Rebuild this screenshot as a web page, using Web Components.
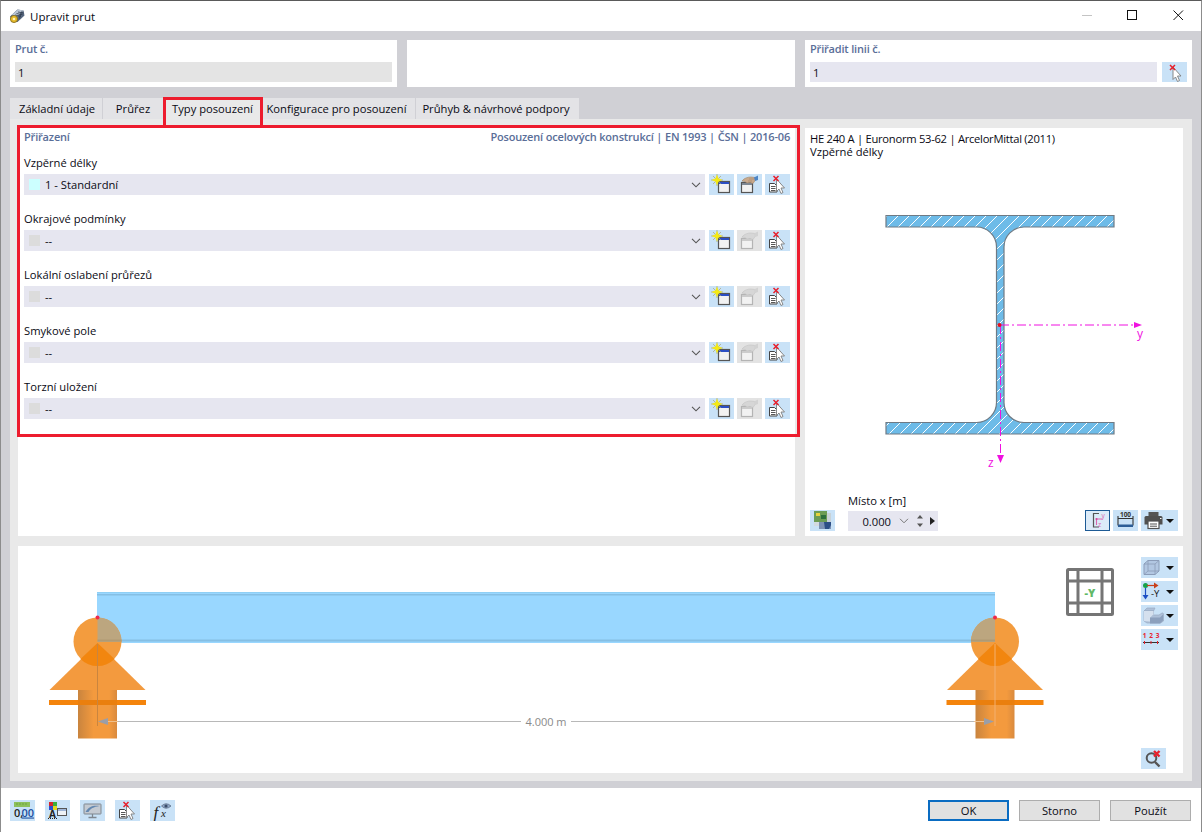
<!DOCTYPE html>
<html lang="cs">
<head>
<meta charset="utf-8">
<title>Upravit prut</title>
<style>
  html, body { margin: 0; padding: 0; background: #d0d0d5; }
  body { font: 11.2px "Open Sans", "Noto Sans", sans-serif; color: #0a0a14; }
</style>
</head>
<body>
<edit-member-dialog></edit-member-dialog>

<script>
const WIN = (x, y, w, h, bar, line) =>
  `<rect x="${x+.5}" y="${y+.5}" width="${w}" height="${h}" fill="#f2f2f2" stroke="${line}" stroke-width="1.2"/><rect x="${x+1}" y="${y+1}" width="${w-1}" height="2" fill="${bar}"/>`;
const CURSOR = (x, y) =>
  `<path d="M${x} ${y}l8 9h-3.5l2 4.5-2 1-2-4.5-2.5 2.5z" fill="#fff" stroke="#7d7d7d" stroke-width=".9" stroke-linejoin="round"/>`;
const REDX = (x, y, s = 2.5) =>
  `<path d="M${x-s} ${y-s}l${2*s} ${2*s}m0 -${2*s}l-${2*s} ${2*s}" stroke="#e8202c" stroke-width="1.5" fill="none"/>`;
const STAR = (x, y) =>
  `<path d="M${x} ${y-6}v12M${x-6} ${y}h12M${x-4} ${y-4}l8 8M${x+4} ${y-4}l-8 8" stroke="#a3a37a" stroke-width=".7"/><path d="M${x} ${y-3.5}l1 2.5 2.5 1-2.5 1-1 2.5-1-2.5-2.5-1 2.5-1z" fill="#f8ee10" stroke="#f3e818" stroke-width="1.5"/>`;

const ICONS = {
  new: WIN(9, 7, 11, 11, '#2c4fc4', '#555') + STAR(8, 6),
  edit: WIN(4, 8, 11, 10, '#7d8793', '#555') +
    `<path d="M5 7c2-3 6-4 9-4l4 .5 .5 2.5-2.5 3.5-3-1-3 .5-2-1.5z" fill="#c9a98c" stroke="#a08468" stroke-width=".6"/><path d="M12 5h5M11 7h4" stroke="#a08468" stroke-width=".6"/><path d="M17 3.5l4-2v4.5l-3 1z" fill="#4d86c6"/>`,
  editoff: WIN(4, 8, 11, 10, '#cccccc', '#b4b4b4') +
    `<path d="M5 7c2-3 6-4 9-4l4 .5 .5 2.5-2.5 3.5-3-1-3 .5-2-1.5z" fill="#d6d6d6" stroke="#c2c2c2" stroke-width=".6"/><path d="M17 3.5l4-2v4.5l-3 1z" fill="#d2d2d2"/>`,
  pickdoc: `<path d="M4.5 9.5h5l2.5 2.5v6h-7.5z" fill="#fff" stroke="#444"/><path d="M6 12.5h4.5M6 14.5h4.5M6 16.5h4.5" stroke="#444" stroke-width=".9"/>` + CURSOR(11.5, 5) + REDX(11, 4.5),
  pick: CURSOR(11, 5) + REDX(10.5, 5.5),
  picture: `<rect x="4" y="1" width="13" height="11" fill="#6b9c55"/><rect x="6" y="3" width="4" height="3" fill="#e8d33c"/><rect x="11" y="5" width="5" height="4" fill="#2c6f3d"/><rect x="17" y="3" width="4" height="9" fill="#c8d2d8"/><rect x="9" y="12" width="12" height="7" fill="#7d92b4"/><rect x="4" y="12" width="5" height="4" fill="#d3dae0"/><path d="M14 12h7v3l-2 4h-4z" fill="#2d4f86"/>`,
  axes: `<path d="M14 3.5H8.5v13.500H14" fill="none" stroke="#555" stroke-width="1.2"/><path d="M11.5 9h6M11.5 9v6" stroke="#d866ae" stroke-width="1.1" fill="none"/><circle cx="11.5" cy="9" r="1.1" fill="#d6459c"/><text x="16.500" y="7.500" font-size="6.5" fill="#d866ae">y</text><text x="13" y="17" font-size="6.5" fill="#d866ae">z</text>`,
  dims: `<text x="12.5" y="7" font-size="6.5" font-weight="700" text-anchor="middle" fill="#333">100</text><path d="M5 6v9.500M20 6v9.500M5 8.500h15" stroke="#333" stroke-width="1.1" fill="none"/><rect x="5" y="14.500" width="15" height="2.5" fill="#2d5d96"/>`,
  printer: `<rect x="7.5" y="2" width="10" height="4" fill="#555"/><path d="M3.5 7.5q0-1.5 1.5-1.5h15q1.5 0 1.5 1.5v7h-18z" fill="#505050"/><rect x="7" y="11" width="11" height="7.5" fill="#fff" stroke="#505050" stroke-width="1.2"/><path d="M9 14h7M9 16.200h7" stroke="#505050"/><rect x="19" y="8" width="1.5" height="1" fill="#fff"/>`,
  cube: `<path d="M3 7l4-3.5h11v10.500l-4 3.500H3z" fill="#a9bedb" fill-opacity=".75" stroke="#8b9cb8"/><path d="M3 7h11v10.500M14 7l4-3.5M3 17.500l4-3.500h11M7 3.5v10.500" fill="none" stroke="#8b9cb8" stroke-width=".8"/>`,
  dir: `<circle cx="4.5" cy="4.5" r="2.5" fill="#17a24c"/><path d="M6 4.5h8" stroke="#c8401a" stroke-width="1.2"/><path d="M13 1.5l4.5 3-4.5 3z" fill="#c8401a"/><path d="M4.5 7v8" stroke="#1c4fc4" stroke-width="1.2"/><path d="M1.5 14h6l-3 4.5z" fill="#1c4fc4"/><text x="10" y="16" font-size="9.5" fill="#111">-Y</text>`,
  solid: `<path d="M3 6l3-3h8l-1.5 3zM3 6h9.5v4H18l3-2h1l.5 1v7l-3 2H6l-3-2z" fill="#aec0d8" stroke="#9aabc3" stroke-width=".7"/><path d="M3 6h9.5v4h-1L9 13v3.5L3 16z" fill="#d5e0ee"/><path d="M9 12.5h10l3-3v6l-3 3H9z" fill="#8ca0bd"/>`,
  numbering: `<g fill="#e8202c" font-size="6.5" font-weight="700" text-anchor="middle"><text x="3.5" y="9">1</text><text x="10" y="9">2</text><text x="16.5" y="9">3</text></g><path d="M2 13.5h16" stroke="#333"/><path d="M3.5 12v3M10 12v3M16.500 12v3" stroke="#e8202c"/>`,
  zoomoff: `<circle cx="10.5" cy="10" r="4.8" fill="none" stroke="#555" stroke-width="2"/><path d="M14 14l4.5 4.5" stroke="#555" stroke-width="2.4"/>` + `<path d="M13 3l5.5 5.5m0-5.5l-5.5 5.5" stroke="#e8202c" stroke-width="2.4"/>`,
  decimals: `<rect x="4" y="2" width="16" height="5" fill="#8cc05a"/><path d="M7 3v2M10 3v2M13 3v2M16 3v2" stroke="#5e9838" stroke-width=".7"/><text x="4" y="16.5" font-size="11" font-weight="600" fill="#222">0,</text><text x="11.5" y="16.5" font-size="11" font-weight="600" fill="#1c4fa0" text-decoration="underline">00</text>`,
  colors: `<rect x="4" y="2" width="4" height="4" fill="#d8262c"/><rect x="8" y="2" width="4" height="4" fill="#3cae3c"/><rect x="4" y="6" width="4" height="4" fill="#2c4fd0"/><rect x="8" y="6" width="4" height="4" fill="#e4d820"/><rect x="12.5" y="8.5" width="9" height="7" fill="#eef2f6" stroke="#555"/><rect x="13" y="9" width="8" height="2" fill="#9fb6d8"/><text x="4" y="18" font-size="10" font-weight="700" fill="#222">A</text><path d="M3 18.5h10" stroke="#222" stroke-dasharray="1 1"/>`,
  display: `<rect x="4" y="4" width="17" height="10" rx=".5" fill="#c4cad2" stroke="#7f8790"/><path d="M5.5 12c3-5.5 8-7 14-6-6 1-9 2.5-11 6z" fill="#6488b0"/><path d="M12.5 14v3M8.5 17.5h8" stroke="#7f8790" stroke-width="1.3"/>`,
  formula: `<text x="3.5" y="18" font-family="Liberation Serif, serif" font-style="italic" font-size="17" fill="#222">f</text><text x="11" y="17" font-family="Liberation Serif, serif" font-style="italic" font-size="11" fill="#222">x</text><path d="M11.5 6q4.5-4.5 9.5 0-5 4.5-9.5 0z" fill="#8ea7c6" stroke="#54647c" stroke-width=".7"/><circle cx="16" cy="6" r="1.6" fill="#3a4d6a"/>`
};

class AppIcon extends HTMLElement {
  connectedCallback() {
    const root = this.shadowRoot || this.attachShadow({ mode: 'open' });
    root.innerHTML = `
      <style>:host { display: block; width: 25px; height: 21px; } svg { display: block; font-family: "Open Sans", sans-serif; }</style>
      <svg width="25" height="21" viewBox="0 0 25 21">${ICONS[this.getAttribute('name')] || ''}</svg>`;
  }
}
customElements.define('app-icon', AppIcon);

class ToolButton extends HTMLElement {
  connectedCallback() {
    const name = this.getAttribute('icon');
    const menu = this.hasAttribute('menu');
    this.attachShadow({ mode: 'open' }).innerHTML = `
      <style>
        :host { display: flex; align-items: center; box-sizing: border-box; flex: none;
                width: ${menu ? 37 : 25}px; height: 21px; background: #c9e2f7; }
        :host([disabled]) { background: #e3e3e3; }
        :host([active]) { outline: 1px solid #1d5a94; outline-offset: -1px; background: #dcebf8; }
        .arrow { width: 0; height: 0; border: 4px solid transparent; border-bottom: 0; border-top: 4px solid #111; }
      </style>
      <app-icon name="${name}"></app-icon>${menu ? '<span class="arrow"></span>' : ''}`;
  }
}
customElements.define('tool-button', ToolButton);

class TitleBar extends HTMLElement {
  connectedCallback() {
    this.attachShadow({ mode: 'open' }).innerHTML = `
      <style>
        :host { display: flex; align-items: center; height: 30px; background: #fff; flex: none; padding-left: 8px; }
        .name { margin-left: 5px; font-size: 11.5px; }
        .logo { flex: none; }
        .ctl { margin-left: auto; display: flex; }
        .ctl svg { display: block; width: 46px; height: 30px; }
      </style>
      <svg class="logo" width="16" height="16" viewBox="0 0 16 16">
        <path d="M1 8.500L8.500 1.500l6 1 1 5-7 6.500H3z" fill="#55667e"/>
        <path d="M2.500 7L9 1.500l5.500 1L8 8.500z" fill="#b9c5d4"/>
        <path d="M9 4l5.500 1M7.500 5.500l6 1.200M6 7l6 1.400M10.500 10.500l2-7" stroke="#2f3b4e" stroke-width=".8" fill="none"/>
        <circle cx="5" cy="11" r="3.600" fill="#e4b92a" stroke="#7e6418" stroke-width=".8"/>
        <circle cx="5" cy="11" r="1.300" fill="#fff3b8"/>
      </svg>
      <span class="name"><slot></slot></span>
      <div class="ctl">
        <svg viewBox="0 0 46 30"><path d="M19 14.5h10" stroke="#c4c4c4"/></svg>
        <svg viewBox="0 0 46 30"><rect x="18.5" y="9.5" width="9" height="9" fill="none" stroke="#111"/></svg>
        <svg viewBox="0 0 46 30"><path d="M18.5 9.5l9.5 9.5m0-9.5l-9.5 9.5" stroke="#111"/></svg>
      </div>`;
  }
}
customElements.define('title-bar', TitleBar);

class FieldPanel extends HTMLElement {
  connectedCallback() {
    const label = this.getAttribute('label');
    const value = this.getAttribute('value');
    const tone = this.getAttribute('tone') === 'edit' ? '#e6e6f0' : '#e4e4e4';
    this.attachShadow({ mode: 'open' }).innerHTML = `
      <style>
        :host { display: block; background: #fff; height: 47px; padding: 0 5px; box-sizing: border-box; }
        .cap { height: 22px; line-height: 18px; font-weight: 600; font-size: 11px; letter-spacing: -.18px; color: #5a6e98; }
        .row { display: flex; gap: 5px; }
        .val { flex: 1; height: 20px; line-height: 21px; padding-left: 3px; background: ${tone}; }
        tool-button { height: 20px; }
      </style>
      ${label ? `<div class="cap">${label}</div>
      <div class="row"><div class="val">${value}</div>${this.hasAttribute('pick') ? '<tool-button icon="pick"></tool-button>' : ''}</div>` : ''}`;
  }
}
customElements.define('field-panel', FieldPanel);

class TabStrip extends HTMLElement {
  connectedCallback() {
    const tabs = JSON.parse(this.getAttribute('tabs'));
    const active = +this.getAttribute('active');
    this.attachShadow({ mode: 'open' }).innerHTML = `
      <style>
        :host { display: flex; gap: 1px; height: 21px; margin-top: 11px; flex: none; }
        div { box-sizing: border-box; height: 21px; line-height: 22px; text-align: center; background: #e3e3e6; white-space: nowrap; }
        div.on { background: #e9e9e9; }
      </style>
      ${tabs.map((t, i) => `<div class="${i === active ? 'on' : ''}" style="width:${t.w}px;padding-right:${t.pr || 0}px;padding-left:${t.pl || 0}px">${t.label}</div>`).join('')}`;
  }
}
customElements.define('tab-strip', TabStrip);

class ComboRow extends HTMLElement {
  connectedCallback() {
    const swatch = this.getAttribute('swatch') || '#dcdcdc';
    const off = this.hasAttribute('empty') ? 'disabled' : '';
    this.attachShadow({ mode: 'open' }).innerHTML = `
      <style>
        :host { display: block; height: 39px; margin-bottom: 17px; }
        .cap { height: 14px; line-height: 14px; margin-bottom: 4px; }
        .row { display: flex; gap: 3px; height: 21px; }
        .combo { flex: 1; display: flex; align-items: center; background: #e6e6f0; padding-left: 5px; margin-right: 1px; }
        .sw { width: 11px; height: 11px; margin-right: 5px; background: ${swatch}; }
        svg { margin-left: auto; margin-right: 4px; }
      </style>
      <div class="cap">${this.getAttribute('label')}</div>
      <div class="row">
        <div class="combo"><span class="sw"></span><span>${this.getAttribute('value')}</span>
          <svg width="10" height="6" viewBox="0 0 10 6"><path d="M1 .8l4 4 4-4" fill="none" stroke="#555" stroke-width="1.1"/></svg>
        </div>
        <tool-button icon="new"></tool-button>
        <tool-button icon="${off ? 'editoff' : 'edit'}" ${off}></tool-button>
        <tool-button icon="pickdoc"></tool-button>
      </div>`;
  }
}
customElements.define('combo-row', ComboRow);

class AssignPanel extends HTMLElement {
  connectedCallback() {
    this.attachShadow({ mode: 'open' }).innerHTML = `
      <style>
        :host { display: block; background: #fff; padding: 2px 5px 0 6px; box-sizing: border-box; min-width: 0; }
        .head { display: flex; justify-content: space-between; height: 14px; line-height: 14px; margin-bottom: 12px;
                font-weight: 600; font-size: 11px; letter-spacing: -.18px; color: #5a6e98; }
      </style>
      <div class="head"><span>Přiřazení</span><span>Posouzení ocelových konstrukcí | EN 1993 | ČSN | 2016-06</span></div>
      <slot></slot>`;
  }
}
customElements.define('assign-panel', AssignPanel);

class SectionView extends HTMLElement {
  connectedCallback() {
    this.attachShadow({ mode: 'open' }).innerHTML = `
      <style>
        :host { display: flex; flex-direction: column; background: #fff; box-sizing: border-box; padding: 4px 5px 5px; min-width: 0; }
        .info { height: 28px; line-height: 13px; flex: none; }
        .info b { font-weight: 400; letter-spacing: -.27px; }
        svg.draw { display: block; flex: none; margin: 0 -5px; font-family: "Open Sans", sans-serif; }
        .tools { display: flex; align-items: flex-end; margin-top: auto; }
        .place { margin-left: 13px; }
        .cap { height: 18px; line-height: 16px; }
        .spin { display: flex; align-items: center; width: 90px; height: 20px; background: #e6e6f0; }
        .num { width: 43px; text-align: right; }
        .right { margin-left: auto; display: flex; gap: 3px; }
      </style>
      <div class="info"><b>HE 240 A | Euronorm 53-62 | ArcelorMittal (2011)</b><br>Vzpěrné délky</div>
      <svg class="draw" width="378" height="320" viewBox="805 160 378 320">
        <defs>
          <pattern id="hatch" width="11" height="11" patternUnits="userSpaceOnUse" patternTransform="translate(3 0)">
            <rect width="11" height="11" fill="#6dbbe8"/>
            <path d="M-2 13L13 -2M-2 2L2 -2M9 13l4-4" stroke="#fff" stroke-width="1"/>
          </pattern>
        </defs>
        <path d="M886 215.5H1114V227H1024A20 20 0 0 0 1004 247V402A20 20 0 0 0 1024 422.5H1114V434H886V422.5H976A20 20 0 0 0 996.5 402V247A20 20 0 0 0 976 227H886Z"
              fill="url(#hatch)" stroke="#6f7a84" stroke-width="1.2"/>
        <path d="M1000 325H1134" stroke="#f010e0" stroke-dasharray="9 3 2 3" fill="none"/>
        <path d="M1000.5 325V455" stroke="#f010e0" stroke-dasharray="9 3 2 3" fill="none"/>
        <path d="M1134 322l8 3-8 3zM997 455h7l-3.5 8z" fill="#f010e0"/>
        <circle cx="999.5" cy="325" r="2" fill="#e8101c"/>
        <text x="1137" y="338" font-size="12" fill="#f010e0">y</text>
        <text x="988" y="467" font-size="12" fill="#f010e0">z</text>
      </svg>
      <div class="tools">
        <tool-button icon="picture"></tool-button>
        <div class="place">
          <div class="cap">Místo x [m]</div>
          <div class="spin">
            <span class="num">0.000</span>
            <svg style="margin-left:8px" width="10" height="6" viewBox="0 0 10 6"><path d="M1 .8l4 4 4-4" fill="none" stroke="#777" stroke-width="1"/></svg>
            <svg style="margin-left:7px" width="8" height="14" viewBox="0 0 8 14"><path d="M4 1l3 3.5H1zM4 13L1 9.5h6z" fill="#555"/></svg>
            <svg style="margin-left:6px" width="5" height="8" viewBox="0 0 5 8"><path d="M0 0l5 4-5 4z" fill="#222"/></svg>
          </div>
        </div>
        <div class="right">
          <tool-button icon="axes" active></tool-button>
          <tool-button icon="dims"></tool-button>
          <tool-button icon="printer" menu></tool-button>
        </div>
      </div>`;
  }
}
customElements.define('section-view', SectionView);

// left support leans on the beam with its right half, the other one with its left half
const SUPPORT = (cx, flip) => {
  const sweep = flip ? 0 : 1;
  const edge = flip ? cx - 24 : cx + 24;
  return `
    <circle cx="${cx}" cy="641.5" r="24" fill="#f39c3e"/>
    <path d="M${cx} 617.5A24 24 0 0 ${sweep} ${edge} 642H${cx}Z" fill="#bca67f"/>
    <rect x="${flip ? cx - 24 : cx}" y="639.5" width="24" height="2" fill="#b09a74"/>
    <path d="M${cx} 643L${cx+48} 690H${cx-48}Z" fill="#f39a3e"/>
    <path d="M${cx} 643L${cx+17} 659A24 24 0 0 1 ${cx-17} 659Z" fill="#f2860f"/>
    <rect x="${cx-19.5}" y="690" width="39" height="48.5" fill="url(#shaft)"/>
    <rect x="${cx-48.5}" y="700" width="97" height="5" fill="#f4840c"/>
    <rect x="${cx-19.5}" y="700" width="39" height="5" fill="#ea7f0e"/>
    <path d="M${cx} 644V726" stroke="${flip ? '#f3b070' : '#c9853f'}"/>
    <circle cx="${cx}" cy="617.5" r="2" fill="#ee2a4c"/>`;
};

class BeamView extends HTMLElement {
  connectedCallback() {
    this.attachShadow({ mode: 'open' }).innerHTML = `
      <style>
        :host { display: block; position: relative; background: #fff; min-width: 0; }
        svg { display: block; font-family: "Open Sans", sans-serif; }
        .stack { position: absolute; left: 1123px; top: 11px; display: flex; flex-direction: column; gap: 3px; }
        .erase { position: absolute; left: 1123px; top: 202px; }
      </style>
      <svg width="1165" height="227" viewBox="18 546 1165 227">
        <defs>
          <linearGradient id="shaft" x1="0" x2="1" y1="0" y2="0"><stop offset="0" stop-color="#c9843e"/><stop offset=".4" stop-color="#f39a3e"/><stop offset=".8" stop-color="#f39a3e"/><stop offset="1" stop-color="#d98a3e"/></linearGradient>
        </defs>
        <rect x="97" y="592" width="898" height="51" fill="#99d7ff"/>
        <rect x="97" y="592" width="898" height="1" fill="#8fcff5"/>
        <rect x="97" y="594" width="898" height="1.5" fill="#86bfe4"/>
        <rect x="97" y="639.5" width="898" height="2" fill="#86bfe4"/>
        ${SUPPORT(97.5, false)}
        ${SUPPORT(995, true)}
        <path d="M118 721.5H521M571 721.5H974" stroke="#b8b8b8" stroke-width="1.2"/>
        <path d="M98 721.5l10-3.5v7zM994 721.5l-10-3.5v7z" fill="#9a9ea8"/>
        <path d="M108 721.5h10M974 721.5h10" stroke="#efc08c"/>
        <text x="546" y="725.5" font-size="11" text-anchor="middle" fill="#8a8a8a">4.000 m</text>
        <g fill="none" stroke="#757575" stroke-width="3">
          <rect x="1067.5" y="569.5" width="45" height="45" rx="1"/>
          <path d="M1078 569v46M1102 569v46M1067 581h46M1067 603h46"/>
        </g>
        <text x="1090" y="597" font-size="11" font-weight="800" text-anchor="middle" fill="#62b866">-Y</text>
      </svg>
      <div class="stack">
        <tool-button icon="cube" menu></tool-button>
        <tool-button icon="dir" menu></tool-button>
        <tool-button icon="solid" menu></tool-button>
        <tool-button icon="numbering" menu></tool-button>
      </div>
      <tool-button class="erase" icon="zoomoff"></tool-button>`;
  }
}
customElements.define('beam-view', BeamView);

class DialogFooter extends HTMLElement {
  connectedCallback() {
    this.attachShadow({ mode: 'open' }).innerHTML = `
      <style>
        :host { display: flex; align-items: center; flex: none; height: 44px; background: #fff; padding: 0 10px 0 9px; box-sizing: border-box; }
        .left { display: flex; gap: 10px; }
        .right { margin-left: auto; display: flex; gap: 10px; }
        button { box-sizing: border-box; width: 81px; height: 21px; padding: 0; font: inherit; color: inherit;
                 background: #e1e1e1; border: 1px solid #adadad; }
        button.primary { border: 2px solid #0a6cc2; background: #e1e1e1; }
      </style>
      <div class="left">
        <tool-button icon="decimals"></tool-button>
        <tool-button icon="colors"></tool-button>
        <tool-button icon="display"></tool-button>
        <tool-button icon="pickdoc"></tool-button>
        <tool-button icon="formula"></tool-button>
      </div>
      <div class="right">
        <button class="primary">OK</button>
        <button>Storno</button>
        <button>Použít</button>
      </div>`;
  }
}
customElements.define('dialog-footer', DialogFooter);

class EditMemberDialog extends HTMLElement {
  connectedCallback() {
    const tabs = [
      { label: 'Základní údaje', w: 92, pl: 2 }, { label: 'Průřez', w: 60 }, { label: 'Typy posouzení', w: 97 },
      { label: 'Konfigurace pro posouzení', w: 153, pr: 4 }, { label: 'Průhyb &amp; návrhové podpory', w: 163, pr: 3 }
    ];
    this.attachShadow({ mode: 'open' }).innerHTML = `
      <style>
        :host { display: flex; flex-direction: column; position: relative; width: 1202px; height: 832px; box-sizing: border-box;
                border-top: 1px solid #5a5a5a; border-left: 1px solid #8c8c8c; border-right: 1px solid #8c8c8c; background: #d0d0d5; overflow: hidden; }
        .main { flex: 1; display: flex; flex-direction: column; padding: 9px 9px 7px 9px; min-height: 0; }
        .fields { display: grid; grid-template-columns: 387px 388px 387px; gap: 10px; flex: none; }
        .sheet { flex: 1; display: grid; grid-template-columns: 777px 378px; grid-template-rows: 408px 227px; gap: 10px;
                 background: #e9e9e9; padding: 9px 9px 8px 8px; min-height: 0; }
        beam-view { grid-column: 1 / 3; }
        .mark { position: absolute; box-sizing: border-box; border: 3px solid #ed1c2e; pointer-events: none; }
      </style>
      <title-bar>Upravit prut</title-bar>
      <div class="main">
        <div class="fields">
          <field-panel label="Prut č." value="1"></field-panel>
          <field-panel></field-panel>
          <field-panel label="Přiřadit linii č." value="1" tone="edit" pick></field-panel>
        </div>
        <tab-strip active="2" tabs='${JSON.stringify(tabs)}'></tab-strip>
        <div class="sheet">
          <assign-panel>
            <combo-row label="Vzpěrné délky" value="1 - Standardní" swatch="#ccffff"></combo-row>
            <combo-row label="Okrajové podmínky" value="--" empty></combo-row>
            <combo-row label="Lokální oslabení průřezů" value="--" empty></combo-row>
            <combo-row label="Smykové pole" value="--" empty></combo-row>
            <combo-row label="Torzní uložení" value="--" empty></combo-row>
          </assign-panel>
          <section-view></section-view>
          <beam-view></beam-view>
        </div>
      </div>
      <dialog-footer></dialog-footer>
      <div class="mark" style="left:162px;top:96px;width:100px;height:29px;border-bottom:0"></div>
      <div class="mark" style="left:16px;top:124px;width:783px;height:312px"></div>`;
  }
}
customElements.define('edit-member-dialog', EditMemberDialog);
</script>
</body>
</html>
